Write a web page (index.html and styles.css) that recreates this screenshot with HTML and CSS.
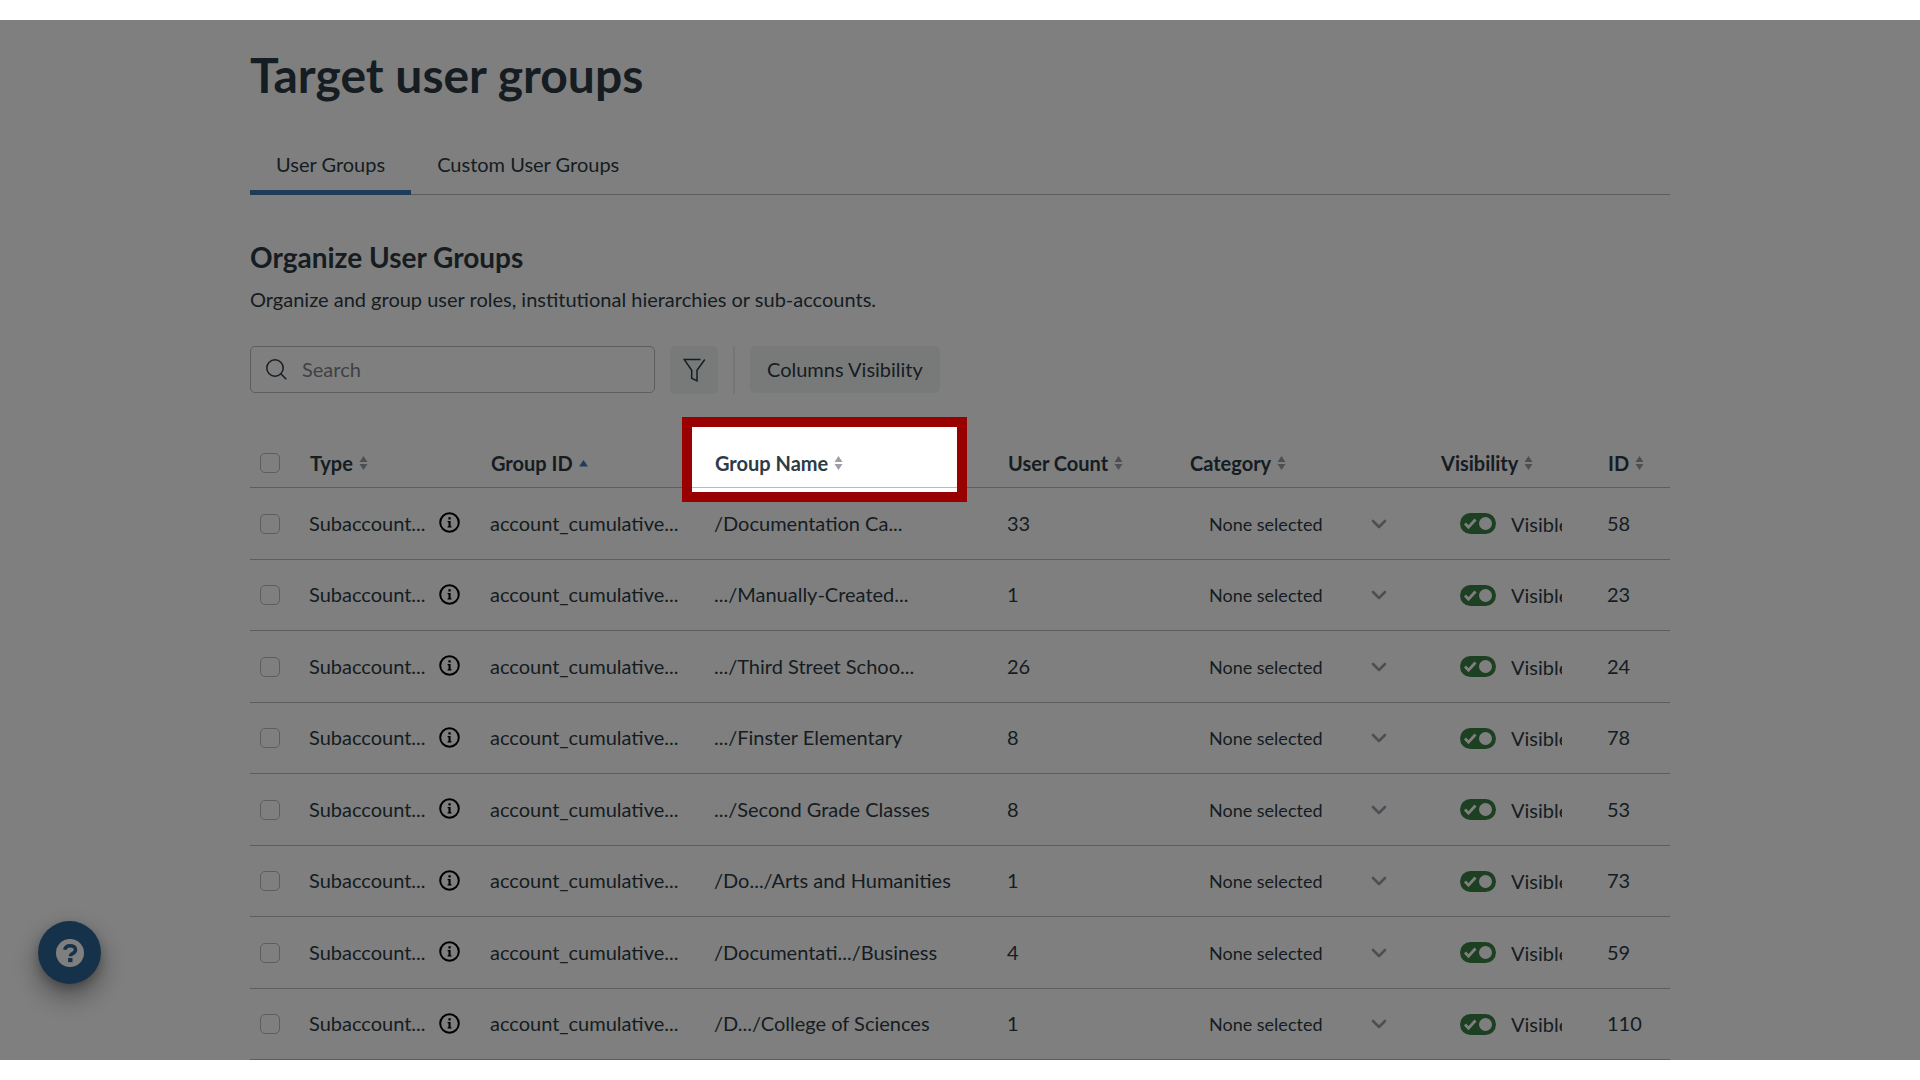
FILE: index.html
```html
<!DOCTYPE html>
<html lang="en">
<head>
<meta charset="utf-8">
<meta name="viewport" content="width=device-width, initial-scale=1">
<title>Target user groups</title>
<link rel="stylesheet" href="styles.css">
</head>
<body>
<svg class="sprite" aria-hidden="true">
  <symbol id="sort" viewBox="0 0 9 14"><path d="M4.500 0 8.500 6H.5zM.5 8h8l-4 6z"/></symbol>
  <symbol id="sort-up" viewBox="0 0 9 14"><path d="M4.500 4 9 10.500H0z"/></symbol>
  <symbol id="info" viewBox="0 0 21 21"><circle cx="10.500" cy="10.500" r="9.300" fill="none" stroke="currentColor" stroke-width="2"/><path d="M9.400 5.300h2.300v2.200H9.400zM8.600 9h3v5.200h.9v1.200H8.600v-1.200h.9v-4h-.9z"/></symbol>
  <symbol id="chevron" viewBox="0 0 16 10"><path d="M2 2l6 6 6-6" fill="none" stroke="currentColor" stroke-width="2.600" stroke-linecap="round" stroke-linejoin="round"/></symbol>
</svg>
<main class="page">
  <div class="content">
    <h1 class="title">Target user groups</h1>
    <nav class="tabs">
      <a class="tab tab-active" href="#groups" aria-current="page">User Groups</a>
      <a class="tab" href="#custom">Custom User Groups</a>
    </nav>
    <h2 class="subtitle">Organize User Groups</h2>
    <p class="intro">Organize and group user roles, institutional hierarchies or sub-accounts.</p>
    <div class="toolbar">
      <label class="search">
        <svg class="search-icon" viewBox="0 0 21 21" aria-hidden="true"><circle cx="9" cy="9" r="8.200"/><path d="M14.800 14.800l5.500 5.500"/></svg>
        <input class="search-input" type="search" placeholder="Search" aria-label="Search">
      </label>
      <button class="button button-icon" type="button" aria-label="Filter">
        <svg class="filter-icon" viewBox="0 0 23 24" aria-hidden="true"><path d="M17.500 1.500H1.200l7.500 10.800v7.900l5.300 2.600V12.300l7.800-10.800"/></svg>
      </button>
      <span class="divider"></span>
      <button class="button" type="button">Columns Visibility</button>
    </div>
    <table class="groups">
      <colgroup><col class="c-check"><col class="c-type"><col class="c-gid"><col class="c-name"><col class="c-count"><col class="c-cat"><col class="c-vis"><col class="c-id"></colgroup>
      <thead>
        <tr>
          <th class="pick"><input class="check" type="checkbox" aria-label="Select all"></th>
          <th><button class="sort" type="button">Type <svg class="sort-icon"><use href="#sort"/></svg></button></th>
          <th><button class="sort" type="button">Group ID <svg class="sort-icon sort-icon-on"><use href="#sort-up"/></svg></button></th>
          <th class="spot"><button class="sort" type="button">Group Name <svg class="sort-icon"><use href="#sort"/></svg></button></th>
          <th><button class="sort" type="button">User Count <svg class="sort-icon"><use href="#sort"/></svg></button></th>
          <th><button class="sort" type="button">Category <svg class="sort-icon"><use href="#sort"/></svg></button></th>
          <th><button class="sort" type="button">Visibility <svg class="sort-icon"><use href="#sort"/></svg></button></th>
          <th><button class="sort" type="button">ID <svg class="sort-icon"><use href="#sort"/></svg></button></th>
        </tr>
      </thead>
      <tbody>
        <tr>
          <td class="pick"><input class="check" type="checkbox" aria-label="Select group 58"></td>
          <td class="text"><span class="type">Subaccount... <svg class="info"><use href="#info"/></svg></span></td>
          <td class="text">account_cumulative...</td><td class="text">/Documentation Ca...</td><td class="text">33</td>
          <td><span class="category"><select class="select" aria-label="Category"><option>None selected</option></select><svg class="chevron"><use href="#chevron"/></svg></span></td>
          <td><label class="toggle"><input class="switch" type="checkbox" checked><span class="toggle-text">Visible</span></label></td>
          <td class="text">58</td>
        </tr>
        <tr>
          <td class="pick"><input class="check" type="checkbox" aria-label="Select group 23"></td>
          <td class="text"><span class="type">Subaccount... <svg class="info"><use href="#info"/></svg></span></td>
          <td class="text">account_cumulative...</td><td class="text">.../Manually-Created...</td><td class="text">1</td>
          <td><span class="category"><select class="select" aria-label="Category"><option>None selected</option></select><svg class="chevron"><use href="#chevron"/></svg></span></td>
          <td><label class="toggle"><input class="switch" type="checkbox" checked><span class="toggle-text">Visible</span></label></td>
          <td class="text">23</td>
        </tr>
        <tr>
          <td class="pick"><input class="check" type="checkbox" aria-label="Select group 24"></td>
          <td class="text"><span class="type">Subaccount... <svg class="info"><use href="#info"/></svg></span></td>
          <td class="text">account_cumulative...</td><td class="text">.../Third Street Schoo...</td><td class="text">26</td>
          <td><span class="category"><select class="select" aria-label="Category"><option>None selected</option></select><svg class="chevron"><use href="#chevron"/></svg></span></td>
          <td><label class="toggle"><input class="switch" type="checkbox" checked><span class="toggle-text">Visible</span></label></td>
          <td class="text">24</td>
        </tr>
        <tr>
          <td class="pick"><input class="check" type="checkbox" aria-label="Select group 78"></td>
          <td class="text"><span class="type">Subaccount... <svg class="info"><use href="#info"/></svg></span></td>
          <td class="text">account_cumulative...</td><td class="text">.../Finster Elementary</td><td class="text">8</td>
          <td><span class="category"><select class="select" aria-label="Category"><option>None selected</option></select><svg class="chevron"><use href="#chevron"/></svg></span></td>
          <td><label class="toggle"><input class="switch" type="checkbox" checked><span class="toggle-text">Visible</span></label></td>
          <td class="text">78</td>
        </tr>
        <tr>
          <td class="pick"><input class="check" type="checkbox" aria-label="Select group 53"></td>
          <td class="text"><span class="type">Subaccount... <svg class="info"><use href="#info"/></svg></span></td>
          <td class="text">account_cumulative...</td><td class="text">.../Second Grade Classes</td><td class="text">8</td>
          <td><span class="category"><select class="select" aria-label="Category"><option>None selected</option></select><svg class="chevron"><use href="#chevron"/></svg></span></td>
          <td><label class="toggle"><input class="switch" type="checkbox" checked><span class="toggle-text">Visible</span></label></td>
          <td class="text">53</td>
        </tr>
        <tr>
          <td class="pick"><input class="check" type="checkbox" aria-label="Select group 73"></td>
          <td class="text"><span class="type">Subaccount... <svg class="info"><use href="#info"/></svg></span></td>
          <td class="text">account_cumulative...</td><td class="text">/Do.../Arts and Humanities</td><td class="text">1</td>
          <td><span class="category"><select class="select" aria-label="Category"><option>None selected</option></select><svg class="chevron"><use href="#chevron"/></svg></span></td>
          <td><label class="toggle"><input class="switch" type="checkbox" checked><span class="toggle-text">Visible</span></label></td>
          <td class="text">73</td>
        </tr>
        <tr>
          <td class="pick"><input class="check" type="checkbox" aria-label="Select group 59"></td>
          <td class="text"><span class="type">Subaccount... <svg class="info"><use href="#info"/></svg></span></td>
          <td class="text">account_cumulative...</td><td class="text">/Documentati.../Business</td><td class="text">4</td>
          <td><span class="category"><select class="select" aria-label="Category"><option>None selected</option></select><svg class="chevron"><use href="#chevron"/></svg></span></td>
          <td><label class="toggle"><input class="switch" type="checkbox" checked><span class="toggle-text">Visible</span></label></td>
          <td class="text">59</td>
        </tr>
        <tr>
          <td class="pick"><input class="check" type="checkbox" aria-label="Select group 110"></td>
          <td class="text"><span class="type">Subaccount... <svg class="info"><use href="#info"/></svg></span></td>
          <td class="text">account_cumulative...</td><td class="text">/D.../College of Sciences</td><td class="text">1</td>
          <td><span class="category"><select class="select" aria-label="Category"><option>None selected</option></select><svg class="chevron"><use href="#chevron"/></svg></span></td>
          <td><label class="toggle"><input class="switch" type="checkbox" checked><span class="toggle-text">Visible</span></label></td>
          <td class="text">110</td>
        </tr>
      </tbody>
    </table>
  </div>
  <button class="help" type="button" aria-label="Help">
    <svg class="help-icon" viewBox="0 0 28 28" aria-hidden="true"><circle cx="14" cy="14" r="14" fill="#fff"/><path d="M8.800 10.800C9.200 7.900 11.200 6.700 14.200 6.700c3.100 0 5.300 1.500 5.300 4 0 2.200-1.300 3-2.900 3.900-1.500.9-2.200 1.200-2.200 2.600" fill="none" stroke="#2b6595" stroke-width="3.600"/><path d="M12.100 19h4.400v4.200h-4.400z" fill="#2b6595"/></svg>
  </button>
</main>
</body>
</html>
```
FILE: styles.css
```css
* { box-sizing: border-box; }

body {
  margin: 0;
  background: #fff;
  color: #2d3b45;
  font: 20px/30px Lato, "Liberation Sans", sans-serif;
}

button, input, select { font: inherit; color: inherit; }

.sprite { display: none; }

/* The page clips the dimming layer thrown by the highlighted header cell. */
.page {
  position: relative;
  margin: 20px 0;
  overflow: hidden;
}

.content {
  max-width: 1420px;
  margin: 0 auto;
  padding-top: 25px;
}

.title {
  margin: 0;
  font-size: 48px;
  line-height: 60px;
  font-weight: 700;
}

.tabs {
  display: flex;
  height: 61px;
  margin-top: 29px;
  border-bottom: 1px solid #b8babd;
}

.tab {
  height: 61px;
  padding: 15px 26px 11px;
  border-bottom: 5px solid transparent;
  color: inherit;
  text-decoration: none;
}

.tab-active { border-bottom-color: #3f76b5; }

.subtitle {
  margin: 45px 0 0;
  font-size: 28px;
  line-height: 34px;
  font-weight: 700;
}

.intro { margin: 10px 0 0; }

.toolbar {
  display: flex;
  align-items: flex-start;
  gap: 15px;
  margin-top: 32px;
}

.search {
  display: flex;
  align-items: center;
  gap: 15px;
  width: 405px;
  height: 47px;
  padding: 0 15px 1px;
  border: 1px solid #b8babd;
  border-radius: 5px;
}

.search-icon, .filter-icon {
  flex: none;
  fill: none;
  stroke: currentColor;
  stroke-width: 1.5;
}

.search-icon { width: 21px; height: 21px; }
.filter-icon { display: block; width: 23px; height: 24px; }

.search-input {
  flex: 1;
  min-width: 0;
  padding: 0;
  border: 0;
  background: none;
}

.search-input::placeholder { color: #7d848c; opacity: 1; }

.button {
  height: 47px;
  padding: 0 17px 2px;
  border: 0;
  border-radius: 5px;
  background: #f1f5f3;
}

.button-icon { width: 48px; height: 48px; padding: 0 13px; }

.divider { width: 2px; height: 48px; background: #ececee; }

.groups {
  width: 100%;
  margin-top: 44px;
  table-layout: fixed;
  border-spacing: 0;
}

.c-check { width: 49px; }
.c-type { width: 181px; }
.c-gid { width: 224px; }
.c-name { width: 293px; }
.c-count { width: 182px; }
.c-cat { width: 251px; }
.c-vis { width: 167px; }
.c-id { width: 73px; }

th, td {
  height: 72px;
  padding: 0 0 0 10px;
  border-bottom: 1px solid #b8babd;
  text-align: left;
  vertical-align: middle;
  white-space: nowrap;
}

th { height: 50px; padding-left: 11px; }
.pick { padding-left: 10px; }
.text { padding-bottom: 2px; }
tbody tr:nth-child(even) td { height: 71px; }

.check {
  display: block;
  width: 20px;
  height: 20px;
  margin: 0;
  border: 1px solid #b8babd;
  border-radius: 5px;
  appearance: none;
}

.sort {
  display: flex;
  align-items: center;
  gap: 6px;
  padding: 0;
  border: 0;
  background: none;
  font-weight: 700;
}

.sort-icon { width: 9px; height: 14px; fill: #9a9fa8; }
.sort-icon-on { fill: #4079b8; }

.type { display: flex; align-items: center; gap: 13px; }
.info { width: 21px; height: 21px; color: #000; }

.category { position: relative; display: block; }

.select {
  display: block;
  width: 216px;
  padding: 0 0 0 20px;
  border: 0;
  background: none;
  font-size: 18px;
  appearance: none;
}

.chevron {
  position: absolute;
  top: 10px;
  left: 182px;
  width: 16px;
  height: 10px;
  color: #9a9fa8;
  pointer-events: none;
}

.toggle {
  display: flex;
  align-items: center;
  gap: 15px;
  width: 122px;
  padding-left: 20px;
}

.toggle-text { overflow: hidden; }

.switch {
  flex: none;
  width: 36px;
  height: 21px;
  margin: 0;
  border-radius: 11px;
  appearance: none;
  background: #3a8045 url("data:image/svg+xml,%3Csvg xmlns='http://www.w3.org/2000/svg' viewBox='0 0 36 21'%3E%3Ccircle cx='25.500' cy='10.500' r='6.500' fill='%23fff'/%3E%3Cpath d='M5 10.500l3.500 3.700 7-7.700' fill='none' stroke='%23fff' stroke-width='2.800'/%3E%3C/svg%3E") center / 36px 21px no-repeat;
}

.help {
  position: absolute;
  left: 38px;
  bottom: 76px;
  display: grid;
  place-items: center;
  width: 63px;
  height: 63px;
  padding: 0;
  border: 0;
  border-radius: 50%;
  background: #2b6595;
  box-shadow: 0 12px 28px rgba(0, 0, 0, .4), 0 4px 10px rgba(0, 0, 0, .2);
}

.help-icon { width: 28px; height: 28px; }

/* Guided-tour highlight: everything outside the frame is dimmed. */
.spot { position: relative; }

.spot::after {
  content: "";
  position: absolute;
  z-index: 10;
  top: -21px;
  left: -22px;
  box-sizing: border-box;
  width: 285px;
  height: 85px;
  border: 10px solid #900;
  box-shadow: 0 0 0 3000px rgba(0, 0, 0, .5);
  pointer-events: none;
}
```
